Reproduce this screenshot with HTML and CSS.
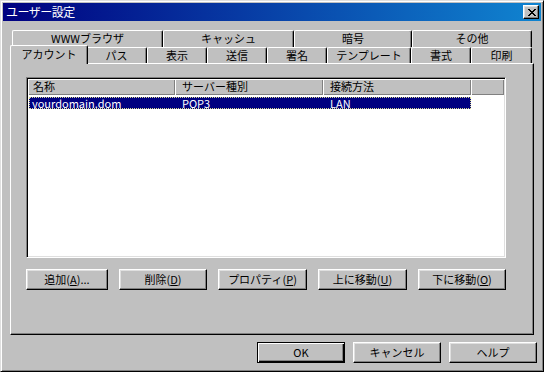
FILE: index.html
```html
<!DOCTYPE html>
<html lang="ja">
<head>
  <meta charset="UTF-8" />
  <title>ユーザー設定</title>
  <link rel="stylesheet" href="styles.css">
</head>
<body>
  <div class="window">
    <div class="titlebar">
      <span class="title">ユーザー設定</span>
      <button class="btn close" aria-label="閉じる">
        <svg width="8" height="7" viewBox="0 0 8 7"><path d="M0 0h2v1h-2z M6 0h2v1h-2z M1 1h2v1h-2z M5 1h2v1h-2z M2 2h4v1h-4z M3 3h2v1h-2z M2 4h4v1h-4z M1 5h2v1h-2z M5 5h2v1h-2z M0 6h2v1h-2z M6 6h2v1h-2z" fill="#000"/></svg>
      </button>
    </div>

    <div class="dialog">
      <div class="tabs">
        <div class="tab-row row-back">
          <div class="tab">WWWブラウザ</div>
          <div class="tab">キャッシュ</div>
          <div class="tab">暗号</div>
          <div class="tab">その他</div>
        </div>
        <div class="tab-row row-front">
          <div class="tab active">アカウント</div>
          <div class="tab">パス</div>
          <div class="tab">表示</div>
          <div class="tab">送信</div>
          <div class="tab">署名</div>
          <div class="tab">テンプレート</div>
          <div class="tab">書式</div>
          <div class="tab">印刷</div>
        </div>
      </div>

      <div class="panel">
        <div class="listview">
          <div class="lv-header">
            <div class="lv-col">名称</div>
            <div class="lv-col">サーバー種別</div>
            <div class="lv-col">接続方法</div>
            <div class="lv-col"></div>
          </div>
          <div class="lv-row selected">
            <div class="lv-cell">yourdomain.dom</div>
            <div class="lv-cell">POP3</div>
            <div class="lv-cell">LAN</div>
          </div>
        </div>

        <div class="actions">
          <button class="btn w82">追加(<u>A</u>)...</button>
          <button class="btn w88">削除(<u>D</u>)</button>
          <button class="btn w89">プロパティ(<u>P</u>)</button>
          <button class="btn w89">上に移動(<u>U</u>)</button>
          <button class="btn w88">下に移動(<u>O</u>)</button>
        </div>
      </div>

      <div class="footer">
        <button class="btn default">OK</button>
        <button class="btn">キャンセル</button>
        <button class="btn">ヘルプ</button>
      </div>
    </div>
  </div>
</body>
</html>
```

FILE: styles.css
```css
* {
  box-sizing: border-box;
}

body {
  margin: 0;
  background: #c0c0c0;
  font-family: "Noto Sans CJK JP", "Liberation Sans", sans-serif;
  font-size: 11px;
  color: #000;
}

.window {
  width: 544px;
  height: 372px;
  padding: 2px;
  border: 1px solid;
  border-color: #dfdfdf #000 #000 #dfdfdf;
  box-shadow: inset 1px 1px #fff, inset -1px -1px #808080;
  background: #c0c0c0;
}

.titlebar {
  height: 18px;
  display: flex;
  align-items: center;
  justify-content: space-between;
  padding: 0 2px 0 3px;
  background: linear-gradient(to right, #000080, #1084d0);
  color: #fff;
}

.title {
  font-size: 12px;
  line-height: 18px;
  letter-spacing: -0.5px;
}

/* classic raised button */
.btn {
  font: inherit;
  color: #000;
  background: #c0c0c0;
  border: 1px solid;
  border-color: #fff #000 #000 #fff;
  box-shadow: inset -1px -1px #808080, inset 1px 1px #dfdfdf;
  padding: 0;
  height: 21px;
  line-height: 17px;
  text-align: center;
}

.btn u {
  text-underline-offset: 1px;
}

.close {
  width: 16px;
  height: 14px;
  display: flex;
  align-items: center;
  justify-content: center;
  padding-left: 1px;
}

.dialog {
  padding: 9px 4px 0 7px;
}

/* tabs */
.tabs {
  margin-left: 2px;
  width: 520px;
}

.tab-row {
  display: grid;
}

.row-back {
  grid-template-columns: 151px 131px 118px 120px;
  height: 17px;
}

.row-front {
  grid-template-columns: 74px 61px 60px 60px 60px 84px 60px 61px;
  height: 16px;
}

.tab {
  background: #c0c0c0;
  border-top: 1px solid #fff;
  border-left: 1px solid #fff;
  border-right: 1px solid #000;
  border-radius: 2px 2px 0 0;
  box-shadow: inset -1px 0 #808080;
  text-align: center;
  white-space: nowrap;
  line-height: 15px;
}

.tab.active {
  position: relative;
  z-index: 2;
  margin: -2px -2px -1px;
  line-height: 17px;
}

/* tab page */
.panel {
  width: 524px;
  height: 272px;
  border: 1px solid;
  border-color: #fff #000 #000 #fff;
  box-shadow: inset -1px -1px #808080;
  padding: 13px 0 0 15px;
}

.listview {
  width: 480px;
  height: 181px;
  padding: 1px;
  background: #fff;
  border: 1px solid;
  border-color: #808080 #fff #fff #808080;
  box-shadow: inset 1px 1px #000, inset -1px -1px #dfdfdf;
}

.lv-header {
  display: grid;
  grid-template-columns: 147px 148px 148px 1fr;
  height: 16px;
}

.lv-col {
  background: #c0c0c0;
  box-shadow: inset 1px 1px #fff, inset -1px -1px #808080;
  padding-left: 7px;
  line-height: 15px;
  white-space: nowrap;
}

.lv-col:first-child {
  padding-left: 5px;
}

.lv-row {
  display: grid;
  grid-template-columns: 146px 148px 148px;
  width: 442px;
  height: 12px;
  margin: 2px 0 0 1px;
}

.lv-row.selected {
  background: #000080;
  color: #fff;
  border: 1px dotted #d8d890;
}

.lv-cell {
  padding-left: 6px;
  line-height: 10px;
  white-space: nowrap;
}

.lv-cell:first-child {
  padding-left: 2px;
}

.actions {
  display: flex;
  justify-content: space-between;
  width: 480px;
  margin-top: 11px;
}

.w82 { width: 82px; }
.w88 { width: 88px; }
.w89 { width: 89px; }

.footer {
  display: flex;
  justify-content: flex-end;
  gap: 8px;
  margin-top: 7px;
}

.footer .btn {
  width: 88px;
}

.btn.default {
  border-color: #000;
  box-shadow: inset 1px 1px #fff, inset -1px -1px #000, inset -2px -2px #808080;
}
```
